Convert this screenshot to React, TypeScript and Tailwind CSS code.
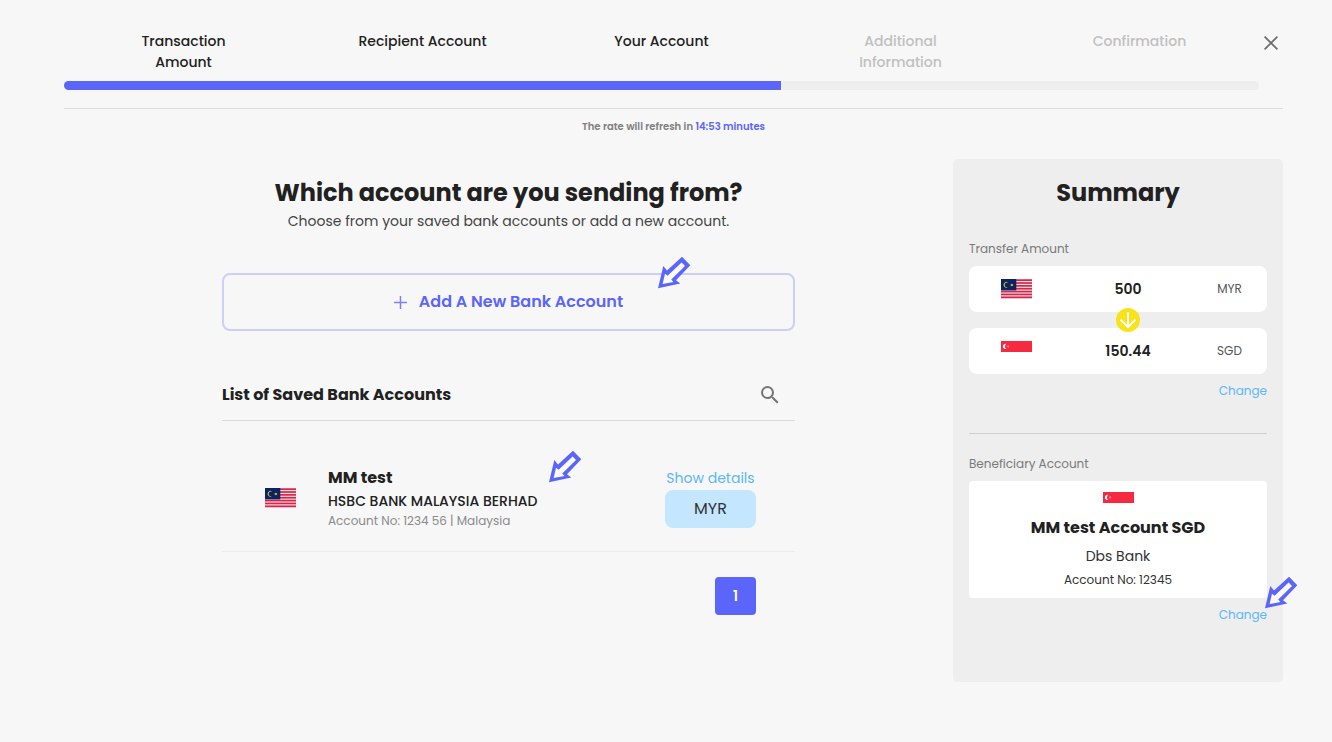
import React from "react";
import { MdSearch } from "react-icons/md";

function MalaysiaFlag() {
  return (
    <svg width="31" height="20" viewBox="0 0 31 20" role="img" aria-label="Malaysia">
      <rect width="31" height="20" fill="#f3dde3" />
      {[0, 1, 2, 3, 4, 5, 6].map((i) => (
        <rect key={i} y={i * 2.86 + 0.3} width="31" height="1.7" fill="#d3284c" />
      ))}
      <rect width="15.3" height="11.4" fill="#0a2463" />
      <path d="M7.2 3.6A2.9 2.9 0 1 0 7.2 8.2A2.5 2.5 0 1 1 7.2 3.6Z" fill="#e0b820" />
      <path
        d="M10.9 4.4l.4 .9 1-.3-.4 1 .4 1-1-.3-.4.9-.4-.9-1 .3.4-1-.4-1 1 .3z"
        fill="#e0b820"
      />
    </svg>
  );
}

function SingaporeFlag() {
  return (
    <svg width="31" height="11" viewBox="0 0 31 11" role="img" aria-label="Singapore">
      <rect width="31" height="11" fill="#f5293f" />
      <path d="M5.2 2.9A2.6 2.6 0 1 0 5.2 7.9A3.2 3.2 0 0 1 5.2 2.9Z" fill="#fff" />
      <circle cx="7" cy="4.5" r=".4" fill="#fff" />
      <circle cx="6.3" cy="5.4" r=".4" fill="#fff" />
      <circle cx="7.8" cy="5.4" r=".4" fill="#fff" />
      <circle cx="7.1" cy="6.3" r=".4" fill="#fff" />
    </svg>
  );
}

function Pointer({ className }: { className: string }) {
  return (
    <svg
      className={"pointer-events-none absolute " + className}
      width="33"
      height="33"
      viewBox="0 0 33 33"
      aria-hidden="true"
    >
      <path d="M0 32.3L5.3 10L9 14.6L24 .7L32.3 9.3L18 24.3L22.3 27.6Z" fill="#5c65fa" />
      <path d="M4.6 28L7 17.8L9.6 19.8L23.6 6.4L27 10L13.2 23.6L15.4 26Z" fill="#fbfbfb" />
    </svg>
  );
}

const steps = [
  { first: "Transaction", second: "Amount", active: true },
  { first: "Recipient Account", second: "", active: true },
  { first: "Your Account", second: "", active: true },
  { first: "Additional", second: "Information", active: false },
  { first: "Confirmation", second: "", active: false },
];

function Header() {
  return (
    <header className="flex border-b border-[#dcdcdc] pt-[31px] pb-[18px]">
      <div className="flex-1">
        <ol className="grid h-[50px] grid-cols-5 text-center text-sm leading-[21px] font-medium">
          {steps.map((s) => (
            <li key={s.first} className={s.active ? "text-[#212121]" : "text-[#c0c0c0]"}>
              {s.first}
              {s.second && <span className="block">{s.second}</span>}
            </li>
          ))}
        </ol>
        <div
          role="progressbar"
          aria-label="Transfer progress"
          aria-valuenow={60}
          aria-valuemin={0}
          aria-valuemax={100}
          className="h-[9px] overflow-hidden rounded-full bg-[#eeeeee]"
        >
          <div className="h-full w-3/5 bg-[#5c65fa]" />
        </div>
      </div>
      <button type="button" aria-label="Close" className="flex h-6 w-6 items-center justify-center">
        <svg width="14" height="14" viewBox="0 0 14 14" stroke="#6b6b6b" strokeWidth="1.7">
          <path d="M.6 .6L13.4 13.4M13.4 .6L.6 13.4" />
        </svg>
      </button>
    </header>
  );
}

function Accounts() {
  return (
    <main className="flex-1 px-[158px] pt-[18px]">
      <h1 className="text-center text-2xl leading-8 font-bold whitespace-nowrap">
        Which account are you sending from?
      </h1>
      <p className="text-center text-sm leading-6 whitespace-nowrap text-[#444]">
        Choose from your saved bank accounts or add a new account.
      </p>

      <div className="relative mt-10">
        <button
          type="button"
          className="flex h-[58px] w-full items-center justify-center gap-3 rounded-lg border-2 border-[#cccff8] text-base font-semibold text-[#5c65fa]"
        >
          <svg width="13" height="13" viewBox="0 0 13 13" stroke="#7b82fa" strokeWidth="1.5">
            <path d="M6.5 0V13M0 6.5H13" />
          </svg>
          Add A New Bank Account
        </button>
        <Pointer className="-top-[17px] right-[104px]" />
      </div>

      <div className="mt-[38px] flex h-[52px] items-center justify-between border-b border-[#dadada] pr-[13px]">
        <h2 className="text-base font-bold">List of Saved Bank Accounts</h2>
        <button type="button" aria-label="Search saved accounts">
          <MdSearch size={24} color="#757575" />
        </button>
      </div>

      <ul>
        <li className="relative flex items-center border-b border-[#ececec] pt-[45px] pr-[39px] pb-[21px] pl-[43px]">
          <MalaysiaFlag />
          <div className="ml-8 flex-1 whitespace-nowrap">
            <h3 className="text-base leading-6 font-bold">MM test</h3>
            <p className="text-sm leading-[22px] font-medium">HSBC BANK MALAYSIA BERHAD</p>
            <p className="text-xs leading-[18px] text-[#8a8a8a]">Account No: 1234 56 | Malaysia</p>
          </div>
          <div className="flex w-[91px] flex-col items-center self-start">
            <a href="#details" className="text-sm leading-6 whitespace-nowrap text-[#5bb8f5]">
              Show details
            </a>
            <span className="flex h-[38px] w-full items-center justify-center rounded-lg bg-[#c4e6ff] text-base text-[#333]">
              MYR
            </span>
          </div>
          <Pointer className="top-[29px] right-[213px]" />
        </li>
      </ul>

      <nav aria-label="Pages" className="mt-[25px] flex justify-end pr-[39px]">
        <button
          type="button"
          aria-current="page"
          className="h-[38px] w-[41px] rounded bg-[#5c65fa] text-sm font-semibold text-white"
        >
          1
        </button>
      </nav>
    </main>
  );
}

function AmountRow({ flag, amount, currency }: { flag: React.ReactNode; amount: string; currency: string }) {
  return (
    <div className="grid h-[46px] grid-cols-[95px_1fr_75px] items-center rounded-lg bg-white text-center">
      <div className="flex h-5 items-start justify-center">{flag}</div>
      <span className="text-sm font-semibold">{amount}</span>
      <span className="text-xs text-[#555]">{currency}</span>
    </div>
  );
}

function Summary() {
  return (
    <aside className="w-[330px] shrink-0 rounded-[5px] bg-[#eeeeee] px-4 pt-[18px] pb-[57px]">
      <h2 className="text-center text-2xl leading-8 font-bold">Summary</h2>

      <h3 className="mt-[30px] text-xs leading-5 text-[#7a7a7a]">Transfer Amount</h3>
      <div className="relative mt-[7px] flex flex-col gap-4">
        <AmountRow flag={<MalaysiaFlag />} amount="500" currency="MYR" />
        <AmountRow flag={<SingaporeFlag />} amount="150.44" currency="SGD" />
        <svg
          className="absolute top-[42px] left-[147px]"
          width="24"
          height="24"
          viewBox="0 0 24 24"
          fill="none"
          aria-hidden="true"
        >
          <circle cx="12" cy="12" r="12" fill="#f7e21c" />
          <path d="M12 4.2V19M4.6 11.8L12 19.2L19.4 11.8" stroke="#fff" strokeWidth="2" />
        </svg>
      </div>
      <div className="mt-[7px] border-b border-[#cfcfcf] pb-8 text-right text-xs leading-5">
        <a href="#amount" className="text-[#5bb8f5]">
          Change
        </a>
      </div>

      <h3 className="mt-5 text-xs leading-5 text-[#7a7a7a]">Beneficiary Account</h3>
      <div className="mt-[7px] flex flex-col items-center rounded bg-white pt-[11px] pb-2 text-center">
        <SingaporeFlag />
        <p className="mt-[13px] text-base leading-6 font-bold">MM test Account SGD</p>
        <p className="mt-1 text-sm leading-6 text-[#333]">Dbs Bank</p>
        <p className="mt-[2px] text-xs leading-5 text-[#333]">Account No: 12345</p>
      </div>
      <div className="relative mt-[7px] text-right text-xs leading-5">
        <a href="#beneficiary" className="text-[#5bb8f5]">
          Change
        </a>
        <Pointer className="-top-[29px] -right-[31px]" />
      </div>
    </aside>
  );
}

export default function App() {
  return (
    <div className="min-h-screen bg-[#f7f7f7] pr-[49px] pb-[60px] pl-16 font-['Poppins','Inter',sans-serif] text-[#212121]">
      <Header />
      <p className="pt-2 text-center text-[10px] leading-5 font-semibold text-[#808080]">
        The rate will refresh in <span className="text-[#5c65fa]">14:53 minutes</span>
      </p>
      <div className="mt-[22px] flex items-start">
        <Accounts />
        <Summary />
      </div>
    </div>
  );
}
